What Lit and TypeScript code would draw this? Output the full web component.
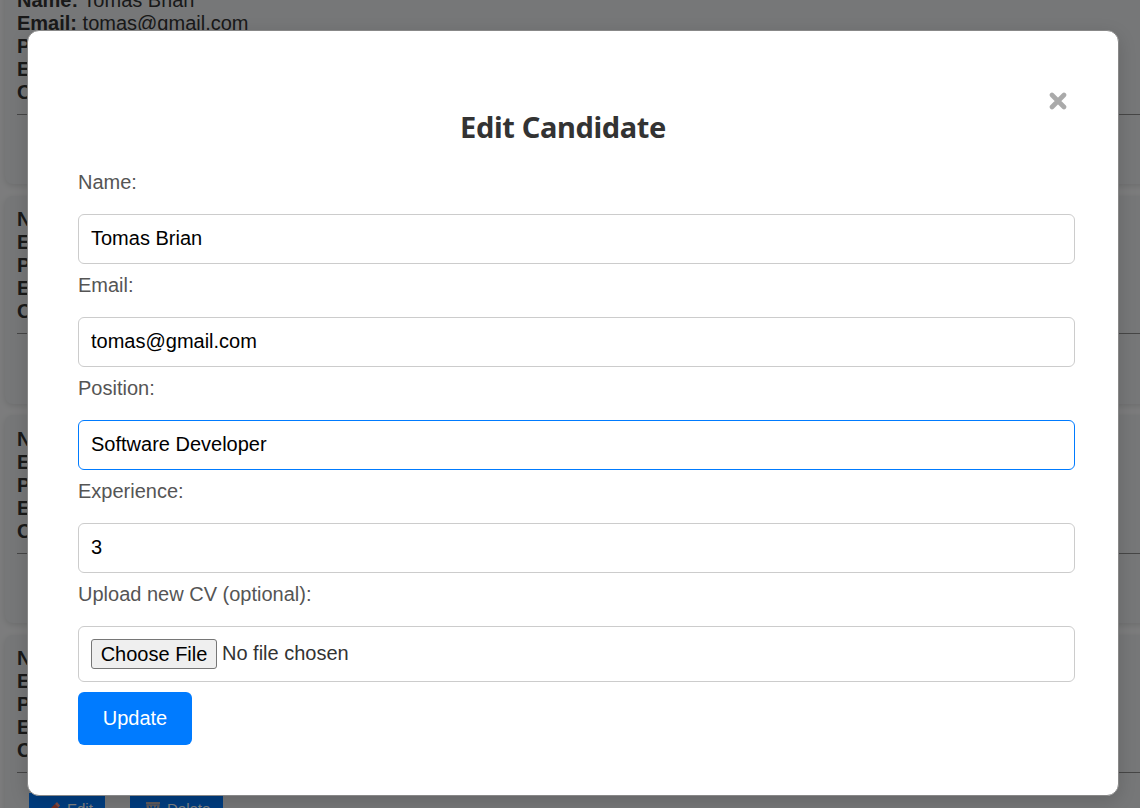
import { LitElement, html, css } from "lit";
import { customElement, property } from "lit/decorators.js";

@customElement("candidate-card")
class CandidateCard extends LitElement {
  static styles = css`
    :host { display: block; box-sizing: border-box; height: 208px; padding: 12.5px 12px 0; background: #eceef0; border-radius: 8px; box-shadow: 0 2px 6px rgba(0,0,0,.12); color: #333; }
    .row { height: 23px; line-height: 23px; white-space: nowrap; }
    hr { margin: 10px 0 0; border: 0; border-top: 1px solid #8c8c8c; height: 0; }
    .actions { display: flex; gap: 25px; padding: 20px 12px 0; }
    .btn { display: flex; align-items: center; gap: 7px; height: 34px; width: 76px; box-sizing: border-box; padding: 0 0 3px 17px; background: #007bff; color: #fff; font-size: 15px; white-space: nowrap; }
    .del { width: 93px; padding-left: 15px; gap: 6px; }
    svg { display: block; flex: none; width: 14px; height: 16px; }
    .del svg { width: 16px; }
  `;
  @property() name = "";
  @property() email = "";
  @property({ type: Boolean }) actions = false;
  render() {
    return html`
      <div class="row"><b>Name:</b> ${this.name}</div>
      <div class="row"><b>Email:</b> ${this.email}</div>
      <div class="row"><b>P</b></div>
      <div class="row"><b>E</b></div>
      <div class="row"><b>C</b></div>
      <hr />
      ${this.actions ? html`<div class="actions">
        <div class="btn"><svg viewBox="0 0 14 16"><path d="M1 14 2.5 9.5 6 13Z" fill="#e8c49a"/><path d="M2.5 9.5 9 3 12.5 6.5 6 13Z" fill="#e65b45"/><path d="M9 3 11 1 14 4.5 12.5 6.5Z" fill="#ff9080"/></svg>Edit</div>
        <div class="btn del"><svg viewBox="0 0 16 16" fill="none" stroke="#c0b4b4" stroke-width="1.3"><path d="M1 2H15" stroke-width="2"/><path d="M2 4H14L12.5 15H3.5ZM3 5 6 14M5 4 10 14M9 4 12 12M13 5 10 14M11 4 6 14M7 4 4 12"/></svg>Delete</div>
      </div>` : ""}`;
  }
}

@customElement("app-root")
class AppRoot extends LitElement {
  static styles = css`
    :host { display: block; position: relative; width: 1140px; height: 808px; overflow: hidden; font: 20px "Liberation Sans", Arial, sans-serif; background: #f8f9fa; }
    .list { display: flex; flex-direction: column; gap: 11.5px; width: 1156px; margin: -24px 0 0 5px; }
    .overlay { position: absolute; inset: 0; display: flex; align-items: flex-start; box-sizing: border-box; padding: 30px 0 0 27px; background: rgba(0,0,0,.5); }
    .modal { width: 1092px; height: 766px; box-sizing: border-box; padding: 51px 43px 0 50px; border: 1px solid #888; border-radius: 12px; background: #fff; box-shadow: 0 5px 18px rgba(0,0,0,.15); display: flex; flex-direction: column; }
    .top { display: flex; justify-content: flex-end; height: 27px; padding-right: 8px; }
    .top svg { width: 18px; height: 18px; margin-top: 10px; }
    h2 { margin: 0; text-align: center; padding-right: 27px; font: 700 29px/36px "Noto Sans", sans-serif; letter-spacing: -.36px; color: #333; }
    form { display: flex; flex-direction: column; align-items: stretch; margin-top: 26px; }
    label { height: 23px; line-height: 23px; margin-bottom: 20px; color: #555; }
    .field { height: 50px; box-sizing: border-box; margin-bottom: 10px; padding: 0 12px 2px; border: 1px solid #ccc; border-radius: 6px; font: inherit; color: #000; background: #fff; outline: 0; }
    .active { border-color: #007bff; }
    .file { height: 56px; display: flex; align-items: center; gap: 5px; padding: 0 12px; color: #333; }
    .choose { box-sizing: border-box; height: 30px; width: 126px; border: 1px solid #767676; border-radius: 3px; background: #efefef; color: #000; text-align: center; line-height: 28px; white-space: nowrap; }
    .status { padding-bottom: 2px; }
    .update { align-self: flex-start; width: 114px; height: 53px; border: 0; border-radius: 6px; background: #007bff; color: #fff; font: inherit; padding: 0 0 1px; }
  `;
  render() {
    return html`
      <div class="list">
        ${[0, 1, 2, 3].map((i) => html`<candidate-card name="Tomas Brian" email="tomas@gmail.com" ?actions=${i === 3}></candidate-card>`)}
      </div>
      <div class="overlay">
        <div class="modal">
          <div class="top"><svg viewBox="0 0 18 18" stroke="#aaa" stroke-width="4.6"><path d="M3 3 15 15M15 3 3 15" stroke-linecap="round"/></svg></div>
          <h2>Edit Candidate</h2>
          <form>
            <label>Name:</label><input class="field" value="Tomas Brian" />
            <label>Email:</label><input class="field" value="tomas@gmail.com" />
            <label>Position:</label><input class="field active" value="Software Developer" />
            <label>Experience:</label><input class="field" value="3" />
            <label>Upload new CV (optional):</label>
            <div class="field file"><span class="choose">Choose File</span><span class="status">No file chosen</span></div>
            <button class="update" type="button">Update</button>
          </form>
        </div>
      </div>`;
  }
}
